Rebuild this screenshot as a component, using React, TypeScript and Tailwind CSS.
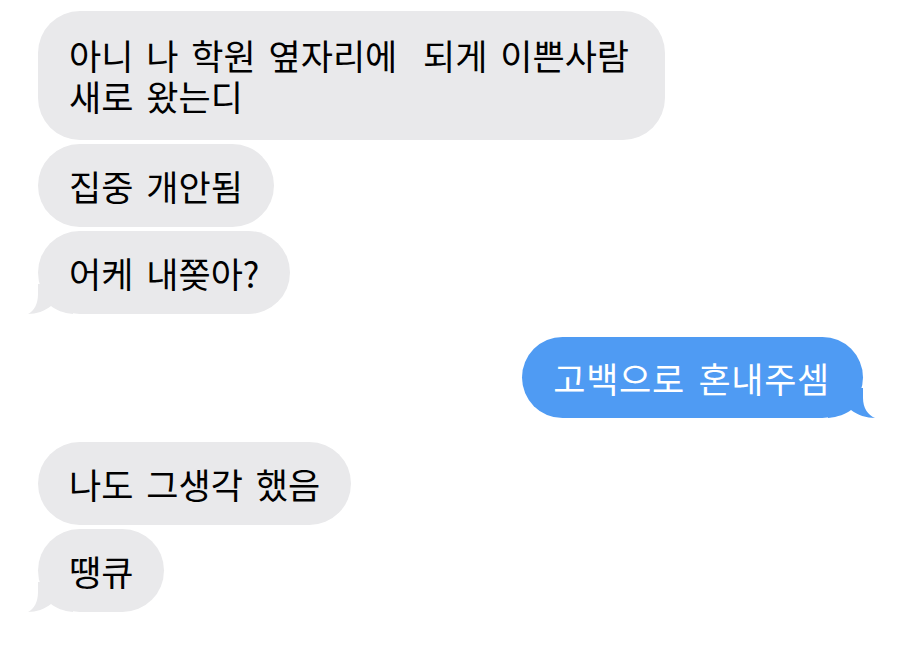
import React from "react";

const font = { fontFamily: '"Noto Sans CJK KR", "Noto Sans", sans-serif' };

function LeftTail() {
  return (
    <svg
      className="absolute left-[-10px] bottom-0"
      width="50"
      height="30"
      viewBox="0 0 50 30"
    >
      <path
        d="M10,0 L10,10 C10,20 6,27 0,30 C8,30 17,27 23,22 C28,26 35,29 45,30 L45,0 Z"
        fill="#e9e9eb"
      />
    </svg>
  );
}

function RightTail() {
  return (
    <svg
      className="absolute right-[-12px] bottom-0"
      width="52"
      height="30"
      viewBox="0 0 52 30"
    >
      <path
        d="M40,0 L40,10 C40,20 45,27 52,30 C44,30 34,27 28,22 C23,26 15,29 5,30 L5,0 Z"
        fill="#4f9bf3"
      />
    </svg>
  );
}

function Gray({
  children,
  tail,
  className = "",
}: {
  children: React.ReactNode;
  tail?: boolean;
  className?: string;
}) {
  return (
    <div
      className={`relative self-start rounded-[42px] bg-[#e9e9eb] px-[31px] py-[21px] text-[35px] leading-[41px] [word-spacing:5px] text-black whitespace-nowrap ${className}`}
    >
      {tail && <LeftTail />}
      <div className="relative">{children}</div>
    </div>
  );
}

export default function App() {
  return (
    <div
      className="w-[900px] h-[646px] bg-white overflow-hidden flex flex-col pl-[38px] pr-[38px] pt-[11px]"
      style={font}
    >
      <Gray className="w-[627px] pt-[23px] pb-[24px]">
        <div className="h-[41px] leading-[41px]">아니 나 학원 옆자리에&nbsp; 되게 이쁜사람</div>
        <div className="h-[41px] leading-[41px]">새로 왔는디</div>
      </Gray>
      <div className="h-[4px]" />
      <Gray>집중 개안됨</Gray>
      <div className="h-[4px]" />
      <Gray tail>어케 내쫒아?</Gray>
      <div className="h-[23px]" />
      <div className="relative self-end mr-[-1px] rounded-[42px] bg-[#4f9bf3] pl-[31px] pr-[33px] py-[20px] text-[35px] leading-[41px] tracking-[0.7px] [word-spacing:5px] text-white whitespace-nowrap">
        <RightTail />
        <div className="relative">고백으로 혼내주셈</div>
      </div>
      <div className="h-[24px]" />
      <Gray>나도 그생각 했음</Gray>
      <div className="h-[4px]" />
      <Gray tail>땡큐</Gray>
    </div>
  );
}
